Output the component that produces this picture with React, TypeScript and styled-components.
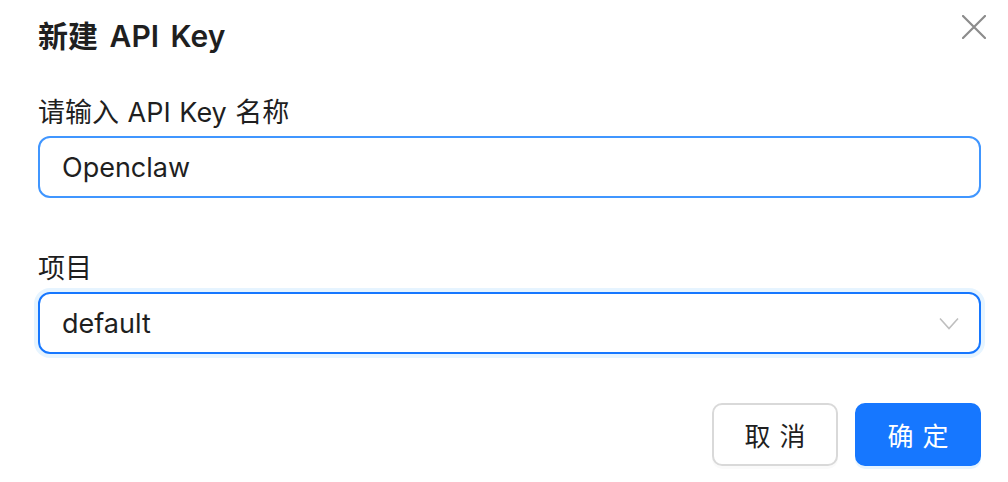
import React from "react";
import styled, { createGlobalStyle } from "styled-components";

const GlobalStyle = createGlobalStyle`
  html, body {
    margin: 0;
    padding: 0;
    background: #ffffff;
  }
  body {
    font-family: Inter, "Noto Sans CJK SC", sans-serif;
    color: #1f1f1f;
  }
  * {
    box-sizing: border-box;
  }
`;

const Dialog = styled.div`
  width: 1008px;
  height: 482px;
  padding: 16px 27px 0 38px;
  display: flex;
  flex-direction: column;
  background: #ffffff;
`;

const Header = styled.div`
  display: flex;
  justify-content: space-between;
  align-items: flex-start;
  margin-bottom: 40px;
`;

const Title = styled.h2`
  margin: 0;
  font-size: 30px;
  line-height: 40px;
  font-weight: 600;
  word-spacing: 4px;
  color: #1f1f1f;
`;

const CloseButton = styled.button`
  width: 34px;
  height: 34px;
  margin: -6px -10px 0 0;
  padding: 0;
  border: none;
  background: transparent;
  display: flex;
  align-items: center;
  justify-content: center;
  cursor: pointer;
`;

const Field = styled.div`
  display: flex;
  flex-direction: column;
  & + & {
    margin-top: 54px;
  }
`;

const Label = styled.label`
  font-size: 27px;
  line-height: 34px;
  word-spacing: 1px;
  margin-bottom: 6px;
  color: #1f1f1f;
`;

const Box = styled.div<{ $focused?: boolean }>`
  height: 62px;
  border-radius: 12px;
  border: 2px solid ${({ $focused }) => ($focused ? "#1677ff" : "#4096ff")};
  box-shadow: ${({ $focused }) =>
    $focused ? "0 0 0 4px rgba(5, 145, 255, 0.1)" : "none"};
  padding: 0 22px;
  display: flex;
  align-items: center;
  justify-content: space-between;
  font-size: 27px;
  color: #1f1f1f;
`;

const Arrow = styled.span`
  display: flex;
  margin-right: -2px;
`;

const Footer = styled.div`
  margin-top: 49px;
  display: flex;
  justify-content: flex-end;
  gap: 17px;
`;

const Button = styled.button<{ $primary?: boolean }>`
  width: 126px;
  height: 63px;
  border-radius: 10px;
  font-family: Inter, "Noto Sans CJK SC", sans-serif;
  font-size: 26px;
  letter-spacing: 0.34em;
  padding: 0 0 0 0.34em;
  cursor: pointer;
  border: 2px solid ${({ $primary }) => ($primary ? "#1677ff" : "#d9d9d9")};
  background: ${({ $primary }) => ($primary ? "#1677ff" : "#ffffff")};
  color: ${({ $primary }) => ($primary ? "#ffffff" : "#1f1f1f")};
  box-shadow: ${({ $primary }) =>
    $primary ? "0 3px 0 rgba(5, 145, 255, 0.1)" : "0 3px 0 rgba(0, 0, 0, 0.02)"};
`;

const App = () => {
  return (
    <>
      <GlobalStyle />
      <Dialog>
        <Header>
          <Title>新建 API Key</Title>
          <CloseButton aria-label="close">
            <svg width="24" height="24" viewBox="0 0 24 24">
              <path d="M1 1 L23 23 M23 1 L1 23" stroke="#8c8c8c" strokeWidth="2.2" strokeLinecap="round" />
            </svg>
          </CloseButton>
        </Header>
        <Field>
          <Label>请输入 API Key 名称</Label>
          <Box>Openclaw</Box>
        </Field>
        <Field>
          <Label>项目</Label>
          <Box $focused>
            <span>default</span>
            <Arrow>
              <svg width="20" height="13" viewBox="0 0 20 13">
                <polyline points="1,1.5 10,11.5 19,1.5" fill="none" stroke="#bfbfbf" strokeWidth="1.6" />
              </svg>
            </Arrow>
          </Box>
        </Field>
        <Footer>
          <Button>取消</Button>
          <Button $primary>确定</Button>
        </Footer>
      </Dialog>
    </>
  );
};

export default App;
